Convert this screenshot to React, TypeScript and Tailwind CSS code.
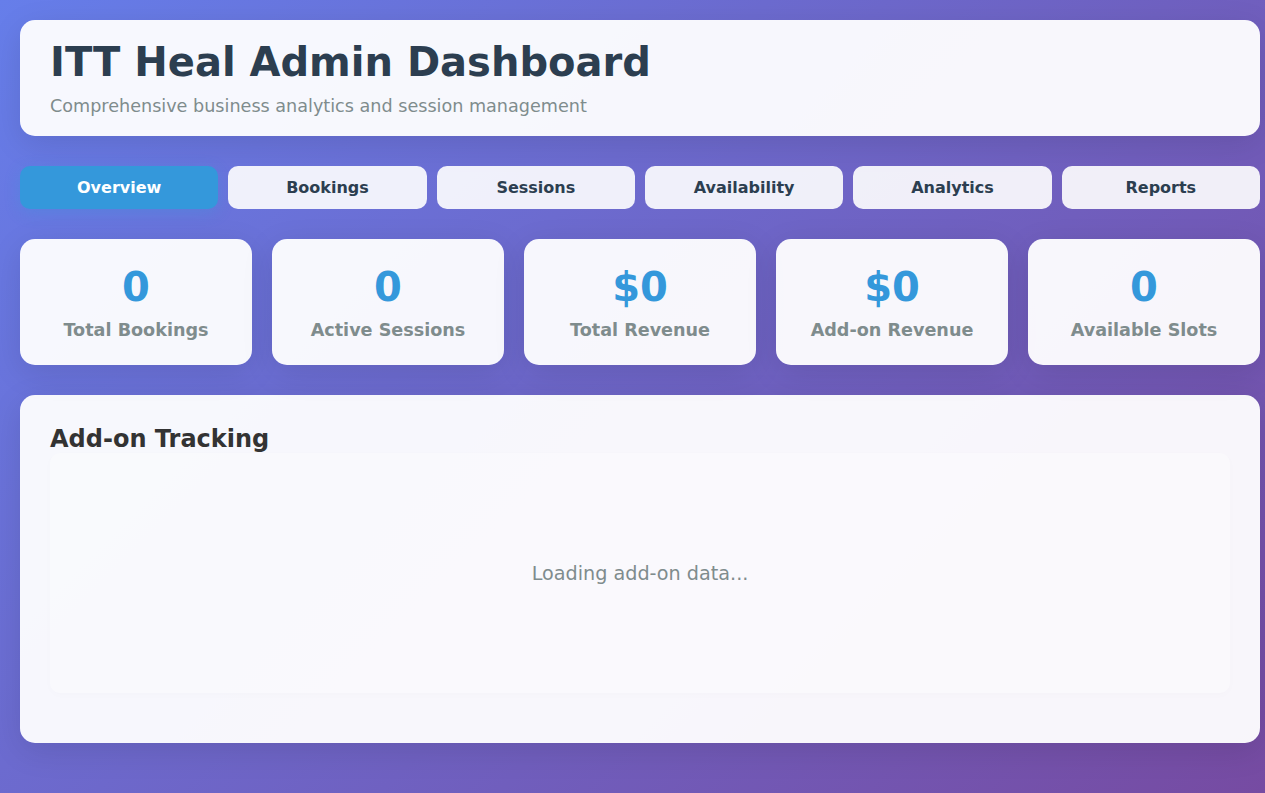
import React from "react";

const stats = [
  { value: "0", label: "Total Bookings" },
  { value: "0", label: "Active Sessions" },
  { value: "$0", label: "Total Revenue" },
  { value: "$0", label: "Add-on Revenue" },
  { value: "0", label: "Available Slots" },
];

const tabs = ["Overview", "Bookings", "Sessions", "Availability", "Analytics", "Reports"];

export default function App() {
  return (
    <div
      className="min-h-[793px] overflow-hidden p-[20px] bg-[linear-gradient(135deg,#667eea_0%,#764ba2_100%)]"
      style={{ fontFamily: '"DejaVu Sans", sans-serif' }}
    >
      <div className="w-[1240px]">
        <div className="rounded-[15px] bg-white/95 px-[30px] pt-[19px] pb-[20px] shadow-[0_8px_32px_rgba(0,0,0,0.1)]">
          <h1 className="text-[40px] font-bold leading-[46px] text-[#2c3e50] mb-[11px]">ITT Heal Admin Dashboard</h1>
          <p className="text-[17.6px] leading-[20px] text-[#7f8c8d]">Comprehensive business analytics and session management</p>
        </div>

        <div className="mt-[30px] flex gap-[10px]">
          {tabs.map((t, i) => (
            <button
              key={t}
              className={
                i === 0
                  ? "flex-1 rounded-[10px] py-[12px] text-[16px] font-bold leading-[19px] text-white bg-[#3498db] shadow-[0_4px_15px_rgba(52,152,219,0.3)]"
                  : "flex-1 rounded-[10px] py-[12px] text-[16px] font-bold leading-[19px] text-[#2c3e50] bg-white/90"
              }
            >
              {t}
            </button>
          ))}
        </div>

        <div className="mt-[30px] grid grid-cols-5 gap-[20px]">
          {stats.map((s) => (
            <div
              key={s.label}
              className="rounded-[15px] bg-white/95 pt-[25px] pb-[25px] px-[10px] text-center shadow-[0_8px_32px_rgba(0,0,0,0.1)]"
            >
              <div className="text-[40px] font-bold leading-[47px] text-[#3498db]">{s.value}</div>
              <div className="mt-[9px] text-[17.6px] font-bold leading-[20px] text-[#7f8c8d]">{s.label}</div>
            </div>
          ))}
        </div>

        <div className="mt-[30px] rounded-[15px] bg-white/95 px-[30px] pt-[30px] pb-[50px] shadow-[0_8px_32px_rgba(0,0,0,0.1)]">
          <h2 className="text-[24px] font-bold leading-[28px] text-[#333]">Add-on Tracking</h2>
          <div className="flex h-[240px] items-center justify-center rounded-[10px] bg-white/30 shadow-[0_2px_8px_rgba(0,0,0,0.015)]">
            <span className="pt-[3px] text-[19.2px] text-[#7f8c8d]">Loading add-on data...</span>
          </div>
        </div>
      </div>
    </div>
  );
}
